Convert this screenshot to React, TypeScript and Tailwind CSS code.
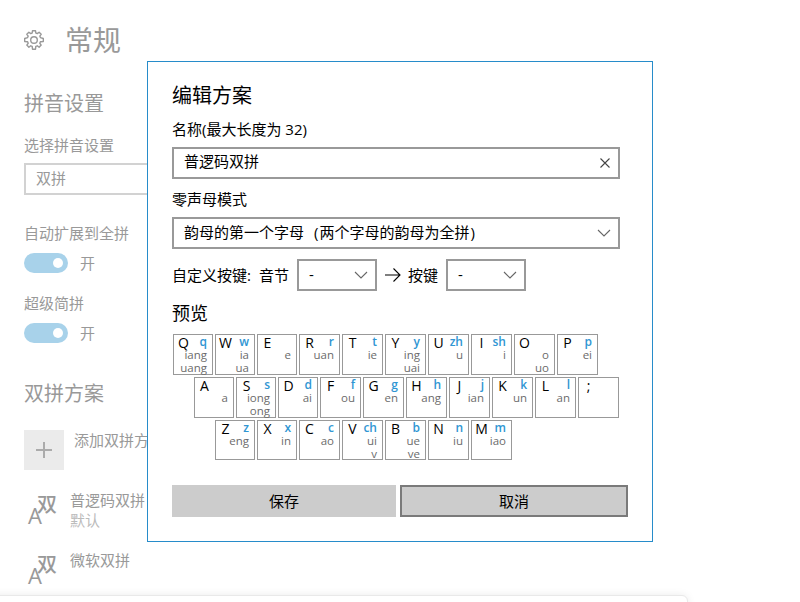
import type { ReactNode } from "react";

type Key = { k: string; s?: string; v?: string[] };

const rows: { pad: string; narrow: number; height: string; keys: Key[] }[] = [
  {
    pad: "pl-[1px]",
    narrow: 3,
    height: "h-[41px]",
    keys: [
      { k: "Q", s: "q", v: ["iang", "uang"] },
      { k: "W", s: "w", v: ["ia", "ua"] },
      { k: "E", v: ["e"] },
      { k: "R", s: "r", v: ["uan"] },
      { k: "T", s: "t", v: ["ie"] },
      { k: "Y", s: "y", v: ["ing", "uai"] },
      { k: "U", s: "zh", v: ["u"] },
      { k: "I", s: "sh", v: ["i"] },
      { k: "O", v: ["o", "uo"] },
      { k: "P", s: "p", v: ["ei"] },
    ],
  },
  {
    pad: "pl-[22px]",
    narrow: 3,
    height: "h-[41px]",
    keys: [
      { k: "A", v: ["a"] },
      { k: "S", s: "s", v: ["iong", "ong"] },
      { k: "D", s: "d", v: ["ai"] },
      { k: "F", s: "f", v: ["ou"] },
      { k: "G", s: "g", v: ["en"] },
      { k: "H", s: "h", v: ["ang"] },
      { k: "J", s: "j", v: ["ian"] },
      { k: "K", s: "k", v: ["un"] },
      { k: "L", s: "l", v: ["an"] },
      { k: ";" },
    ],
  },
  {
    pad: "pl-[43px]",
    narrow: 2,
    height: "h-[40px]",
    keys: [
      { k: "Z", s: "z", v: ["eng"] },
      { k: "X", s: "x", v: ["in"] },
      { k: "C", s: "c", v: ["ao"] },
      { k: "V", s: "ch", v: ["ui", "v"] },
      { k: "B", s: "b", v: ["ue", "ve"] },
      { k: "N", s: "n", v: ["iu"] },
      { k: "M", s: "m", v: ["iao"] },
    ],
  },
];

function KeyCap({ item, size }: { item: Key; size: string }) {
  return (
    <div className={`${size} shrink-0 border border-[#999] pr-[5px]`}>
      <div className="flex h-[13px] justify-between leading-[16px]">
        <span className="w-[19px] text-center text-[14px] text-black">{item.k}</span>
        <span className="text-[12px] font-semibold leading-[13px] text-[#3096d3]">{item.s}</span>
      </div>
      <div className="flex flex-col items-end text-[11.5px] leading-[13px] text-[#6b6b6b]">
        {item.v?.map((t) => (
          <span key={t}>{t}</span>
        ))}
      </div>
    </div>
  );
}

function Chevron() {
  return (
    <svg width="14" height="8" viewBox="0 0 14 8" fill="none" stroke="#666" strokeWidth="1.1">
      <path d="M1 1l6 6 6-6" />
    </svg>
  );
}

function Gear() {
  return (
    <svg width="20" height="20" viewBox="0 0 20 20" fill="none" stroke="#999" strokeWidth="1.4" strokeLinejoin="round">
      <path d="M8.200 3 8.500.7h3l.3 2.300 1.500.6 1.800-1.400 2.100 2.100-1.400 1.800.6 1.500 2.900.9v3l-2.900.3-.6 1.500 1.400 1.800-2.100 2.100-1.800-1.400-1.500.6-.3 2.900h-3l-.3-2.900-1.500-.6-1.800 1.400-2.100-2.100 1.400-1.800-.6-1.500-2.900-.3v-3l2.900-.9.6-1.500-1.400-1.800 2.100-2.100 1.800 1.400z" />
      <circle cx="10" cy="10" r="3.3" />
    </svg>
  );
}

function Toggle() {
  return (
    <div className="flex h-5 items-center gap-[12px]">
      <div className="flex h-5 w-11 items-center justify-end rounded-full bg-[#a8d2ea] pr-[5px]">
        <div className="size-[10px] rounded-full bg-white" />
      </div>
      <span>开</span>
    </div>
  );
}

function Scheme({ name, note }: { name: string; note?: string }) {
  return (
    <div className="flex h-[60px] whitespace-nowrap">
      <div className="relative h-10 w-[46px] shrink-0">
        <span className="absolute left-[13px] top-[4px] text-[20px] font-medium leading-[22px]">双</span>
        <span className="absolute left-[4px] top-[14px] text-[22px] font-medium leading-[22px]">A</span>
      </div>
      <div className="leading-[20px]">
        <div>{name}</div>
        <div className="text-[#bbb]">{note}</div>
      </div>
    </div>
  );
}

function SmallSelect({ className }: { className: string }) {
  return (
    <div className={`flex h-8 items-center justify-between border-2 border-[#999] pl-[10px] pr-[7px] ${className}`}>
      <span className="-mt-[2px]">-</span>
      <Chevron />
    </div>
  );
}

function Label({ children, className }: { children: ReactNode; className: string }) {
  return <div className={`whitespace-nowrap leading-[20px] ${className}`}>{children}</div>;
}

export default function App() {
  return (
    <div className="relative h-[602px] w-[800px] overflow-hidden bg-white font-['Open_Sans','Noto_Sans_CJK_SC',sans-serif] text-[15px] text-black">
      <div className="w-[200px] pl-6 text-[#999]">
        <header className="flex h-20 items-center gap-[21px]">
          <Gear />
          <h1 className="text-[28px] leading-[36px]">常规</h1>
        </header>
        <h2 className="mt-[10px] text-[20px] leading-[28px]">拼音设置</h2>
        <Label className="mt-[17px]">选择拼音设置</Label>
        <div className="mt-2 flex h-8 items-center border-2 border-[#d2d2d2] pl-[10px]">
          <span className="-mt-[2px]">双拼</span>
        </div>
        <Label className="mb-[10px] mt-[28px]">自动扩展到全拼</Label>
        <Toggle />
        <Label className="mb-[10px] mt-[20px]">超级简拼</Label>
        <Toggle />
        <h2 className="mt-[37px] text-[20px] leading-[28px]">双拼方案</h2>
        <div className="mt-[22px] flex h-[60px] gap-[10px]">
          <div className="flex size-10 shrink-0 items-center justify-center bg-[#ebebeb]">
            <svg width="16" height="16" viewBox="0 0 16 16" stroke="#ababab" strokeWidth="2">
              <path d="M0 8h16M8 0v16" />
            </svg>
          </div>
          <Label className="">添加双拼方案</Label>
        </div>
        <Scheme name="普逻码双拼" note="默认" />
        <Scheme name="微软双拼" />
      </div>

      <div className="absolute -left-3 top-[595px] h-10 w-[700px] rounded-[6px] border border-[#e9e9e9] bg-white shadow-[0_0_8px_rgba(0,0,0,0.08)]" />

      <section className="absolute left-[147px] top-[61px] flex h-[481px] w-[506px] flex-col border border-[#278cca] bg-white pl-6 pr-6">
        <h2 className="mt-[20px] text-[20px] leading-[28px]">编辑方案</h2>
        <Label className="mt-[9px]">名称(最大长度为 32)</Label>
        <div className="mt-2 flex h-8 w-[448px] shrink-0 items-center justify-between border-2 border-[#999] pl-[10px] pr-[8px]">
          <span className="-mt-[4px]">普逻码双拼</span>
          <svg width="10" height="10" viewBox="0 0 10 10" stroke="#444" strokeWidth="1.1">
            <path d="M.5.5l9 9M9.5.5l-9 9" />
          </svg>
        </div>
        <Label className="mt-[10px]">零声母模式</Label>
        <div className="mt-2 flex h-8 w-[448px] shrink-0 items-center justify-between border-2 border-[#999] pl-[10px] pr-[7px]">
          <span className="-mt-[2px] whitespace-nowrap">
            韵母的第一个字母<span className="ml-[10px] mr-[1px]">(</span>两个字母的韵母为全拼
            <span className="ml-[1px]">)</span>
          </span>
          <Chevron />
        </div>
        <div className="mt-[10px] flex h-8 shrink-0 items-center whitespace-nowrap">
          <span className="w-[87px]">自定义按键:</span>
          <span className="w-[38px]">音节</span>
          <SmallSelect className="w-[80px]" />
          <svg className="ml-[8px] mr-[7px]" width="16" height="14" viewBox="0 0 16 14" fill="none" stroke="#000" strokeWidth="1.1">
            <path d="M0 7h15M8.5.5L15 7l-6.500 6.500" />
          </svg>
          <span className="w-[38px]">按键</span>
          <SmallSelect className="w-[80px]" />
        </div>
        <h3 className="mt-[9px] text-[18px] leading-[26px]">预览</h3>
        <div className="mt-[8px] flex flex-col gap-[2px]">
          {rows.map((row) => (
            <div key={row.pad} className={`flex gap-[2px] ${row.pad} ${row.height}`}>
              {row.keys.map((item, i) => (
                <KeyCap key={item.k} item={item} size={i < row.narrow ? "w-[40px]" : "w-[41px]"} />
              ))}
            </div>
          ))}
        </div>
        <div className="mt-[25px] flex gap-1">
          <button className="h-8 w-[224px] bg-[#ccc] pt-[1px]">保存</button>
          <button className="h-8 w-[228px] border-2 border-[#7a7a7a] bg-[#ccc] pt-[1px]">取消</button>
        </div>
      </section>
    </div>
  );
}
